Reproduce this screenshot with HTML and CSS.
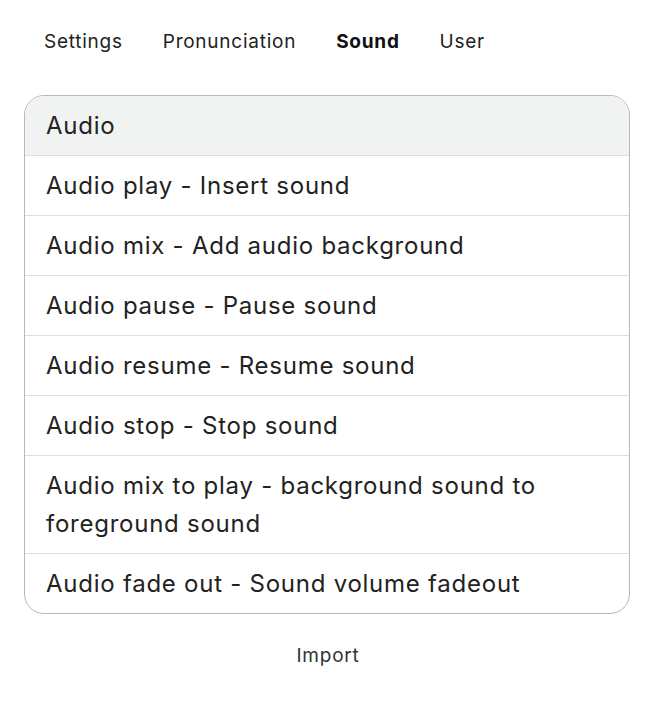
FILE: index.html
```html
<!DOCTYPE html>
<html lang="en">
<head>
    <meta charset="UTF-8">
    <meta name="viewport" content="width=device-width, initial-scale=1.0">
    <title>Sound</title>
    <link rel="stylesheet" href="styles.css">
</head>
<body>
    <nav class="tabs">
        <a class="tab">Settings</a>
        <a class="tab">Pronunciation</a>
        <a class="tab active">Sound</a>
        <a class="tab">User</a>
    </nav>

    <main>
        <ul class="list">
            <li class="list-head">Audio</li>
            <li>Audio play - Insert sound</li>
            <li>Audio mix - Add audio background</li>
            <li>Audio pause - Pause sound</li>
            <li>Audio resume - Resume sound</li>
            <li>Audio stop - Stop sound</li>
            <li>Audio mix to play - background sound to foreground sound</li>
            <li>Audio fade out - Sound volume fadeout</li>
        </ul>
    </main>

    <footer>
        <a class="import">Import</a>
    </footer>
</body>
</html>
```

FILE: styles.css
```css
body {
    font-family: 'Inter', 'Noto Sans', sans-serif;
    margin: 0;
    padding: 0;
    background-color: #fff;
    color: #222;
}

.tabs {
    display: flex;
    padding: 27px 24px 0;
    height: 28px;
    align-items: center;
}

.tab {
    padding: 0 20px;
    font-size: 19px;
    letter-spacing: 0.75px;
    color: #222;
    cursor: pointer;
}

.tab.active {
    font-weight: 700;
    color: #111;
}

main {
    padding: 40px 26px 0 24px;
}

.list {
    list-style: none;
    margin: 0;
    padding: 0;
    border: 1.5px solid #b8b8b8;
    border-radius: 20px;
    overflow: hidden;
}

.list li {
    font-size: 24px;
    letter-spacing: 0.75px;
    line-height: 38px;
    padding: 11px 20px 10px 21px;
    border-top: 1px solid #dcdfe2;
}

.list .list-head {
    border-top: none;
    background-color: #f1f3f2;
}

footer {
    text-align: center;
    padding-top: 30px;
}

.import {
    font-size: 19px;
    letter-spacing: 0.8px;
    color: #333;
    cursor: pointer;
}
```
